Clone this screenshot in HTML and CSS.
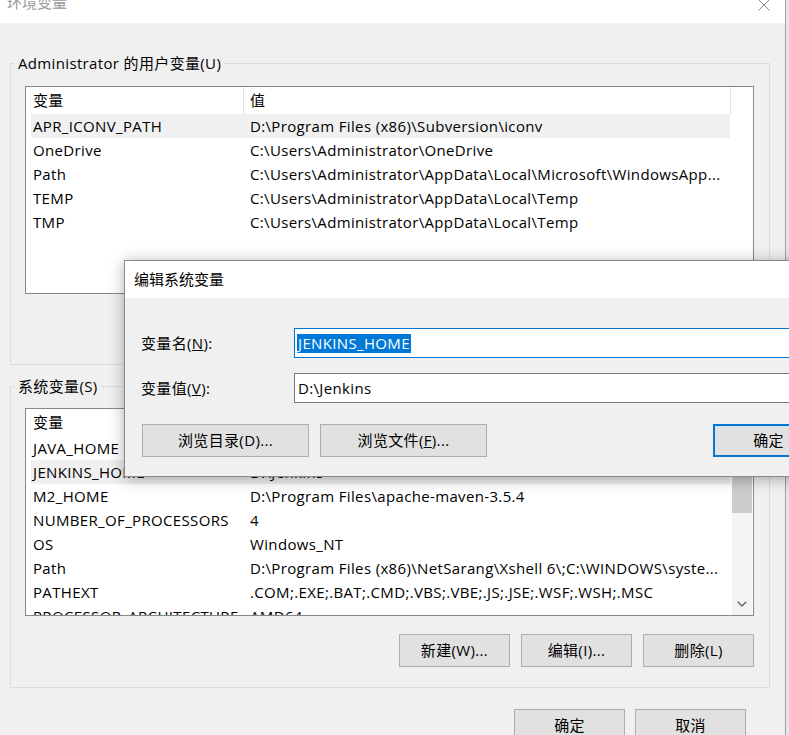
FILE: index.html
```html
<!DOCTYPE html>
<html lang="zh-CN">
<head>
<meta charset="utf-8">
<title>环境变量</title>
<link rel="stylesheet" href="styles.css">
</head>
<body>
<div class="screen">
  <div class="window">
    <div class="titlebar">
      <span class="title">环境变量</span>
      <svg class="close" viewBox="0 0 12 12" width="12" height="12"><path d="M0.5 0.5 L11.5 11.5 M11.5 0.5 L0.5 11.5" stroke="#8c8c8c" stroke-width="1" fill="none"/></svg>
    </div>
    <div class="content">
      <fieldset class="group group-user">
        <legend>Administrator 的用户变量(U)</legend>
        <div class="list">
          <div class="list-main">
            <div class="list-header"><div class="hcell hc1">变量</div><div class="hcell hc2">值</div></div>
            <div class="row sel"><span class="c1">APR_ICONV_PATH</span><span class="c2">D:\Program Files (x86)\Subversion\iconv</span></div>
            <div class="row"><span class="c1">OneDrive</span><span class="c2">C:\Users\Administrator\OneDrive</span></div>
            <div class="row"><span class="c1">Path</span><span class="c2">C:\Users\Administrator\AppData\Local\Microsoft\WindowsApp...</span></div>
            <div class="row"><span class="c1">TEMP</span><span class="c2">C:\Users\Administrator\AppData\Local\Temp</span></div>
            <div class="row"><span class="c1">TMP</span><span class="c2">C:\Users\Administrator\AppData\Local\Temp</span></div>
          </div>
        </div>
      </fieldset>
      <fieldset class="group group-sys">
        <legend>系统变量(S)</legend>
        <div class="list">
          <div class="list-main">
            <div class="list-header"><div class="hcell hc1">变量</div><div class="hcell hc2">值</div></div>
            <div class="row"><span class="c1">JAVA_HOME</span><span class="c2">C:\Program Files\Java\jdk1.8.0</span></div>
            <div class="row sel"><span class="c1">JENKINS_HOME</span><span class="c2">D:\Jenkins</span></div>
            <div class="row"><span class="c1">M2_HOME</span><span class="c2">D:\Program Files\apache-maven-3.5.4</span></div>
            <div class="row"><span class="c1">NUMBER_OF_PROCESSORS</span><span class="c2">4</span></div>
            <div class="row"><span class="c1">OS</span><span class="c2">Windows_NT</span></div>
            <div class="row"><span class="c1">Path</span><span class="c2">D:\Program Files (x86)\NetSarang\Xshell 6\;C:\WINDOWS\syste...</span></div>
            <div class="row"><span class="c1">PATHEXT</span><span class="c2">.COM;.EXE;.BAT;.CMD;.VBS;.VBE;.JS;.JSE;.WSF;.WSH;.MSC</span></div>
            <div class="row"><span class="c1">PROCESSOR_ARCHITECTURE</span><span class="c2">AMD64</span></div>
          </div>
          <div class="scrollbar">
            <div class="thumb"></div>
            <svg class="chev" viewBox="0 0 10 6" width="10" height="6"><path d="M0.8 0.8 L5 5 L9.2 0.8" stroke="#606060" stroke-width="1.3" fill="none"/></svg>
          </div>
        </div>
        <div class="btn-row">
          <button class="btn">新建(W)...</button>
          <button class="btn">编辑(I)...</button>
          <button class="btn">删除(L)</button>
        </div>
      </fieldset>
      <div class="footer">
        <button class="btn">确定</button>
        <button class="btn">取消</button>
      </div>
    </div>
  </div>
  <div class="backdrop"></div>

  <div class="dialog">
    <div class="dlg-title">编辑系统变量</div>
    <div class="dlg-body">
      <div class="field">
        <span class="field-label">变量名(<u>N</u>):</span>
        <div class="input focus"><span class="sel-text">JENKINS_HOME</span></div>
      </div>
      <div class="field">
        <span class="field-label">变量值(<u>V</u>):</span>
        <div class="input">D:\Jenkins</div>
      </div>
      <div class="dlg-buttons">
        <button class="btn btn-wide">浏览目录(D)...</button>
        <button class="btn btn-wide">浏览文件(<u>F</u>)...</button>
        <button class="btn btn-default">确定</button>
      </div>
    </div>
  </div>
</div>
</body>
</html>
```

FILE: styles.css
```css
html, body {
  margin: 0;
  padding: 0;
}

body {
  width: 789px;
  height: 735px;
  overflow: hidden;
  font-family: "Open Sans", "Noto Sans CJK SC", sans-serif;
  font-size: 15px;
  letter-spacing: 0.35px;
  color: #000;
  background: #e8e8e8;
}

.screen {
  position: relative;
  display: flex;
  width: 789px;
  height: 735px;
  overflow: hidden;
}

.window {
  width: 785px;
  flex: none;
  border-right: 1px solid #a0a0a0;
  background: #f0f0f0;
  display: flex;
  flex-direction: column;
}

.backdrop {
  flex: 1;
  background: #e6e6e6;
}

.titlebar {
  height: 23px;
  flex: none;
  background: #fff;
  display: flex;
  justify-content: space-between;
  align-items: flex-start;
  padding: 0 15px 0 7px;
  overflow: hidden;
}

.title {
  color: #9a9a9a;
  line-height: 15px;
  margin-top: -5px;
  letter-spacing: 0;
}

.close {
  display: block;
  margin-top: -1px;
}

.content {
  padding: 30px 0 0 10px;
}

.group {
  margin: 0;
  width: 760px;
  box-sizing: border-box;
  min-width: 0;
  border: 1px solid #dcdcdc;
  padding: 13px 15px 70px 14px;
}

.group legend {
  padding: 0 3px;
  margin-left: -10px;
  line-height: 20px;
}

.group-sys {
  margin-top: 11px;
  padding: 12px 15px 20px 14px;
}

.list {
  height: 208px;
  box-sizing: border-box;
  border: 1px solid #828790;
  background: #fff;
  display: flex;
  overflow: hidden;
}

.list-main {
  flex: 1;
  min-width: 0;
}

.list-header {
  display: flex;
  height: 27px;
  line-height: 27px;
}

.hcell {
  box-sizing: border-box;
  border-right: 1px solid #e5e5e5;
  white-space: nowrap;
}

.hc1 {
  width: 218px;
  padding-left: 7px;
}

.hc2 {
  width: 487px;
  padding-left: 6px;
}

.row {
  display: flex;
  height: 24px;
  line-height: 24px;
  margin-left: 5px;
  width: 699px;
  white-space: nowrap;
}

.row.sel {
  background: #f0f0f0;
}

.c1 {
  width: 219px;
  flex: none;
  padding-left: 2px;
  box-sizing: border-box;
  overflow: hidden;
}

.c2 {
  flex: 1;
  min-width: 0;
  overflow: hidden;
}

.scrollbar {
  width: 20px;
  flex: none;
  margin-right: 1px;
  background: #f4f4f4;
  display: flex;
  flex-direction: column;
}

.thumb {
  margin-top: 18px;
  height: 86px;
  background: #cdcdcd;
}

.chev {
  display: block;
  margin-top: auto;
  margin-bottom: 8px;
  align-self: center;
}

.btn {
  font: inherit;
  letter-spacing: inherit;
  color: #000;
  padding: 0;
  margin: 0;
  width: 111px;
  height: 33px;
  box-sizing: border-box;
  background: #e1e1e1;
  border: 1px solid #adadad;
  line-height: 31px;
  text-align: center;
  white-space: nowrap;
}

.btn-row {
  display: flex;
  justify-content: flex-end;
  gap: 11px;
  margin-top: 18px;
}

.footer {
  display: flex;
  justify-content: flex-end;
  gap: 10px;
  padding-right: 39px;
  margin-top: 21px;
}

/* overlay dialog */
.dialog {
  position: absolute;
  left: 124px;
  top: 260px;
  width: 760px;
  height: 217px;
  box-sizing: border-box;
  border: 1px solid #8a8a8a;
  background: #f0f0f0;
  box-shadow: 0 2px 14px rgba(0, 0, 0, 0.32);
}

.dlg-title {
  height: 37px;
  line-height: 37px;
  background: #fff;
  padding-left: 9px;
  letter-spacing: 0;
}

.dlg-body {
  padding: 29px 0 0 16px;
}

.field {
  display: flex;
  align-items: center;
  height: 30px;
}

.field:first-child {
  margin-top: 1px;
}

.field + .field {
  margin-top: 15px;
}

.field-label {
  width: 153px;
  flex: none;
  margin-top: -2px;
}

.input {
  width: 560px;
  height: 30px;
  flex: none;
  box-sizing: border-box;
  border: 1px solid #7a7a7a;
  background: #fff;
  display: flex;
  align-items: center;
  padding-left: 3px;
  white-space: nowrap;
}

.input.focus {
  border-color: #0078d7;
  padding-left: 2px;
}

.sel-text {
  background: #0078d7;
  color: #fff;
  line-height: 19px;
  padding: 0 1px;
}

.dlg-buttons {
  display: flex;
  margin-top: 21px;
  padding-left: 1px;
}

.btn-wide {
  width: 167px;
}

.btn-wide + .btn-wide {
  margin-left: 11px;
}

.btn-default {
  margin-left: 226px;
  border: 2px solid #0078d7;
  line-height: 29px;
}
```
